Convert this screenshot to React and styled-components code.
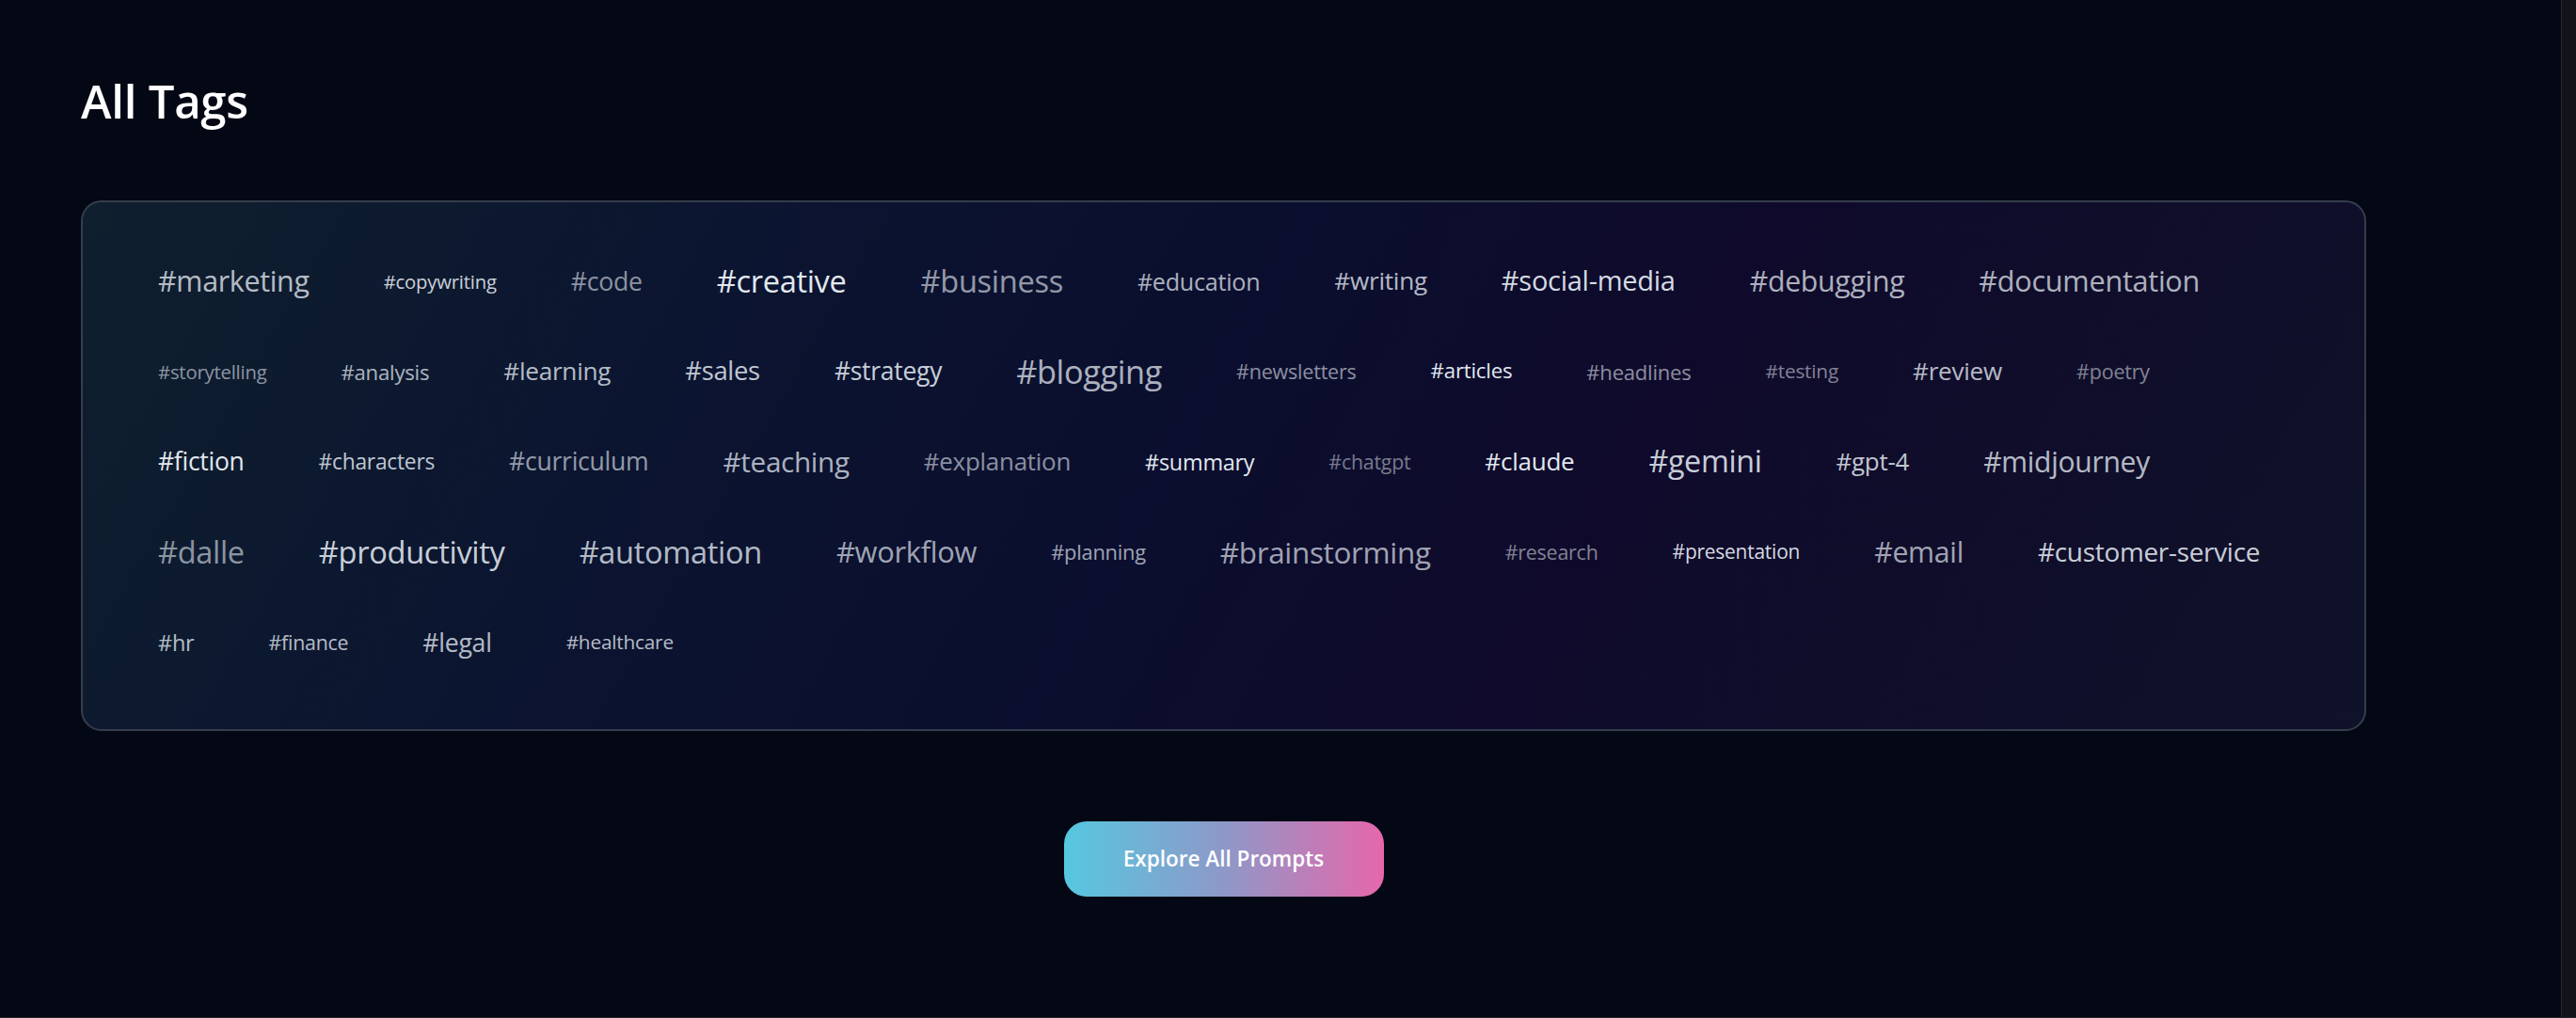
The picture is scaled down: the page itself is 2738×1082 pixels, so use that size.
import React from "react";
import styled, { createGlobalStyle } from "styled-components";

const GlobalStyle = createGlobalStyle`
  html, body {
    margin: 0;
    padding: 0;
    background: #030814;
  }
  body {
    font-family: "Open Sans", "Noto Sans", sans-serif;
  }
`;

// tag cloud data - size is the base font size in px, tone is the text opacity
const tagRows = [
  [
    { name: "marketing", size: 29.5, tone: 0.8 },
    { name: "copywriting", size: 19.7, tone: 0.9 },
    { name: "code", size: 25.9, tone: 0.6 },
    { name: "creative", size: 31.6, tone: 1 },
    { name: "business", size: 31.7, tone: 0.65 },
    { name: "education", size: 24.4, tone: 0.75 },
    { name: "writing", size: 25.4, tone: 0.8 },
    { name: "social-media", size: 28.2, tone: 0.95 },
    { name: "debugging", size: 29.4, tone: 0.75 },
    { name: "documentation", size: 29.8, tone: 0.75 },
  ],
  [
    { name: "storytelling", size: 19.7, tone: 0.6 },
    { name: "analysis", size: 21.5, tone: 0.75 },
    { name: "learning", size: 25.4, tone: 0.8 },
    { name: "sales", size: 26.6, tone: 0.85 },
    { name: "strategy", size: 25.7, tone: 0.9 },
    { name: "blogging", size: 33.3, tone: 0.75 },
    { name: "newsletters", size: 20.9, tone: 0.6 },
    { name: "articles", size: 21.6, tone: 1 },
    { name: "headlines", size: 21.4, tone: 0.6 },
    { name: "testing", size: 20.2, tone: 0.55 },
    { name: "review", size: 25.4, tone: 0.8 },
    { name: "poetry", size: 20.9, tone: 0.55 },
  ],
  [
    { name: "fiction", size: 25.7, tone: 1 },
    { name: "characters", size: 22.1, tone: 0.85 },
    { name: "curriculum", size: 25.8, tone: 0.65 },
    { name: "teaching", size: 28.8, tone: 0.75 },
    { name: "explanation", size: 25.2, tone: 0.6 },
    { name: "summary", size: 22.7, tone: 1 },
    { name: "chatgpt", size: 20.7, tone: 0.5 },
    { name: "claude", size: 25.3, tone: 1 },
    { name: "gemini", size: 31.3, tone: 0.9 },
    { name: "gpt-4", size: 25.2, tone: 0.85 },
    { name: "midjourney", size: 29.2, tone: 0.8 },
  ],
  [
    { name: "dalle", size: 31.6, tone: 0.6 },
    { name: "productivity", size: 31.7, tone: 0.9 },
    { name: "automation", size: 31.6, tone: 0.8 },
    { name: "workflow", size: 30, tone: 0.7 },
    { name: "planning", size: 21.2, tone: 0.7 },
    { name: "brainstorming", size: 30.5, tone: 0.7 },
    { name: "research", size: 20.8, tone: 0.55 },
    { name: "presentation", size: 20.3, tone: 0.95 },
    { name: "email", size: 29.4, tone: 0.7 },
    { name: "customer-service", size: 27.1, tone: 0.9 },
  ],
  [
    { name: "hr", size: 22.8, tone: 0.8 },
    { name: "finance", size: 20.7, tone: 0.8 },
    { name: "legal", size: 25.9, tone: 0.8 },
    { name: "healthcare", size: 20.2, tone: 0.8 },
  ],
];

const App = () => {
  return (
    <>
      <GlobalStyle />
      <Page>
        <Main>
          <Container>
            <Title>All Tags</Title>
            <Cloud>
              {tagRows.map((row, i) => (
                <TagRow key={i}>
                  {row.map((tag) => (
                    <Tag key={tag.name} href="#" $size={tag.size} $tone={tag.tone}>
                      #{tag.name}
                    </Tag>
                  ))}
                </TagRow>
              ))}
            </Cloud>
            <Actions>
              <ExploreButton>Explore All Prompts</ExploreButton>
            </Actions>
          </Container>
        </Main>
        <ScrollTrack />
      </Page>
    </>
  );
};

const Page = styled.div`
  display: flex;
  min-height: 100vh;
  box-sizing: border-box;
  background: #030814;
  border-bottom: 1px solid #23252c;
`;

const Main = styled.main`
  flex: 1;
  padding-top: 78px;
`;

const Container = styled.div`
  width: 2429px;
  margin-left: 86px;
`;

const Title = styled.h2`
  margin: 0 0 76px;
  font-size: 49px;
  line-height: 1.2;
  font-weight: 600;
  color: #ffffff;
  letter-spacing: -0.2px;
`;

const Cloud = styled.div`
  display: flex;
  flex-direction: column;
  gap: 48px;
  padding: 60px 80px 68px;
  border: 2px solid #353d4c;
  border-radius: 22px;
  background: linear-gradient(
    120deg,
    #0f1f2e 0%,
    #0b1430 28%,
    #0b0e2e 48%,
    #0f0a2b 66%,
    #10122a 100%
  );
`;

const TagRow = styled.div`
  display: flex;
  align-items: center;
  gap: 79px;
  height: 48px;
`;

const Tag = styled.a`
  font-size: ${(p) => (p.$size * 1.03).toFixed(2)}px;
  letter-spacing: -0.01em;
  color: rgba(226, 232, 240, ${(p) => p.$tone});
  text-decoration: none;
  white-space: nowrap;
  line-height: 1.2;
`;

const Actions = styled.div`
  display: flex;
  justify-content: center;
  margin-top: 96px;
`;

const ExploreButton = styled.button`
  height: 80px;
  width: 340px;
  border: none;
  border-radius: 24px;
  font-family: "Open Sans", sans-serif;
  font-size: 22.5px;
  font-weight: 600;
  color: #ffffff;
  background: linear-gradient(90deg, #56c8e0 0%, #8e98c8 50%, #e667ab 100%);
  cursor: pointer;
`;

const ScrollTrack = styled.div`
  width: 15px;
  flex-shrink: 0;
  background: #121318;
  border-left: 1px solid #26272d;
`;

export default App;
